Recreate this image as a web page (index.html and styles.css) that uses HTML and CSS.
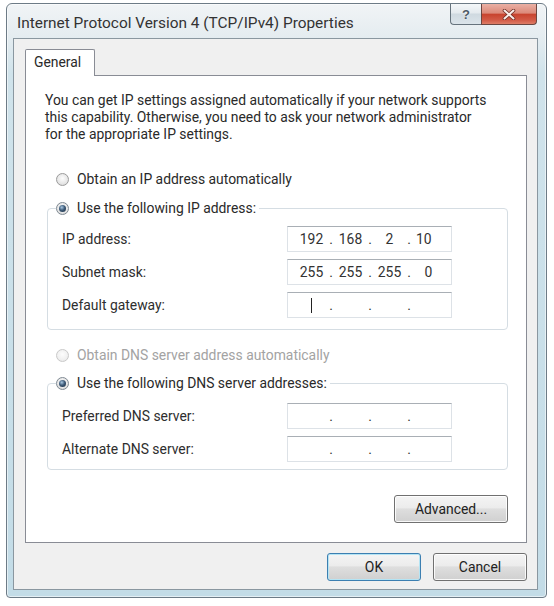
FILE: index.html
```html
<!DOCTYPE html>
<html lang="en">
<head>
<meta charset="utf-8">
<title>Internet Protocol Version 4 (TCP/IPv4) Properties</title>
<link rel="stylesheet" href="styles.css">
</head>
<body>
<div class="window">
  <div class="titlebar">
    <div class="title">Internet Protocol Version 4 (TCP/IPv4) Properties</div>
    <div class="caption-buttons">
      <div class="cbtn help">?</div>
      <div class="cbtn close">
        <svg width="14" height="11" viewBox="0 0 14 11">
          <path d="M2.5 1.5 L11.5 9.5 M11.5 1.5 L2.5 9.5" stroke="#6e2c24" stroke-width="3.6" stroke-linecap="round" fill="none"/>
          <path d="M2.5 1.5 L11.5 9.5 M11.5 1.5 L2.5 9.5" stroke="#fbeeea" stroke-width="2" stroke-linecap="round" fill="none"/>
        </svg>
      </div>
    </div>
  </div>
  <div class="client">
    <div class="tabs"><div class="tab">General</div></div>
    <div class="panel">
      <p class="intro">You can get IP settings assigned automatically if your network supports<br>this capability. Otherwise, you need to ask your network administrator<br>for the appropriate IP settings.</p>

      <div class="option first"><span class="radio"></span><span>Obtain an IP address automatically</span></div>

      <fieldset class="group">
        <legend class="legend"><span class="radio on"></span><span>Use the following IP address:</span></legend>
        <div class="rows ip-rows">
          <div class="label">IP address:</div>
          <div class="ipbox"><span class="seg">192</span><span class="dot">.</span><span class="seg">168</span><span class="dot">.</span><span class="seg">2</span><span class="dot">.</span><span class="seg seg-left">10</span></div>
          <div class="label">Subnet mask:</div>
          <div class="ipbox"><span class="seg">255</span><span class="dot">.</span><span class="seg">255</span><span class="dot">.</span><span class="seg">255</span><span class="dot">.</span><span class="seg">0</span></div>
          <div class="label">Default gateway:</div>
          <div class="ipbox"><span class="seg"><span class="caret"></span></span><span class="dot">.</span><span class="seg"></span><span class="dot">.</span><span class="seg"></span><span class="dot">.</span><span class="seg"></span></div>
        </div>
      </fieldset>

      <div class="option disabled dns-auto"><span class="radio"></span><span>Obtain DNS server address automatically</span></div>

      <fieldset class="group dns-group">
        <legend class="legend"><span class="radio on"></span><span>Use the following DNS server addresses:</span></legend>
        <div class="rows dns-rows">
          <div class="label">Preferred DNS server:</div>
          <div class="ipbox"><span class="seg"></span><span class="dot">.</span><span class="seg"></span><span class="dot">.</span><span class="seg"></span><span class="dot">.</span><span class="seg"></span></div>
          <div class="label">Alternate DNS server:</div>
          <div class="ipbox"><span class="seg"></span><span class="dot">.</span><span class="seg"></span><span class="dot">.</span><span class="seg"></span><span class="dot">.</span><span class="seg"></span></div>
        </div>
      </fieldset>

      <button class="btn adv">Advanced...</button>
    </div>
    <div class="dlg-buttons">
      <button class="btn ok">OK</button>
      <button class="btn">Cancel</button>
    </div>
  </div>
</div>
</body>
</html>
```

FILE: styles.css
```css
html, body {
  margin: 0;
  background: #ffffff;
}

body {
  font-family: Roboto, "Liberation Sans", sans-serif;
  font-size: 13.9px;
  color: #2a2a2a;
}

.window {
  margin: 3px 0 0 6px;
  width: 541px;
  box-sizing: border-box;
  border: 1px solid #6d7b86;
  border-radius: 6px 6px 4px 4px;
  background: linear-gradient(to bottom, #f1f4f6 0px, #e4ecf0 34px, #d0e3eb 70px, #c3dce7 100%);
  box-shadow: inset 0 0 0 1px rgba(255, 255, 255, 0.55);
  display: flex;
  flex-direction: column;
}

.titlebar {
  display: flex;
  height: 34px;
  padding-left: 10px;
}

.title {
  padding-top: 10px;
  font-size: 15.4px;
  line-height: 18px;
  color: #333333;
}

.caption-buttons {
  margin-left: auto;
  margin-right: 9px;
  display: flex;
  height: 21px;
}

.cbtn {
  box-sizing: border-box;
  height: 21px;
  display: flex;
  align-items: center;
  justify-content: center;
  border: 1px solid #66737d;
  border-top: none;
}

.help {
  width: 31px;
  border-right: none;
  border-radius: 0 0 0 4px;
  background: linear-gradient(to bottom, #f4f7f9 0%, #e4eaee 45%, #cfd9e0 50%, #dbe4ea 100%);
  font-family: "Liberation Sans", sans-serif;
  font-weight: bold;
  font-size: 13px;
  color: #4d5a64;
  text-shadow: 0 0 2px #ffffff;
}

.close {
  width: 56px;
  border-color: #6b4640;
  border-radius: 0 0 4px 0;
  background: linear-gradient(to bottom, #eab0a4 0%, #dc8a7a 45%, #c8442f 52%, #d25a46 80%, #de7d66 100%);
}

.close svg {
  display: block;
}

.client {
  margin: 0 8px 7px 6px;
  border: 1px solid #8a97a0;
  background: #f0f0f0;
  padding: 10px 10px 8px 11px;
  display: flex;
  flex-direction: column;
}

.tabs {
  display: flex;
}

.tab {
  position: relative;
  z-index: 1;
  box-sizing: border-box;
  height: 27px;
  margin-bottom: -1px;
  padding: 4px 13px 0 8px;
  line-height: 17px;
  border: 1px solid #898c95;
  border-bottom: none;
  border-radius: 2px 2px 0 0;
  background: #ffffff;
  color: #2a2a2a;
}

.panel {
  border: 1px solid #898c95;
  background: #ffffff;
  padding: 16px 18px 19px 19px;
  display: flex;
  flex-direction: column;
}

.intro {
  margin: 0;
  line-height: 17px;
}

.option,
.legend {
  display: flex;
  align-items: center;
  gap: 8px;
  height: 18px;
  line-height: 18px;
  color: #2a2a2a;
}

.option {
  margin-left: 11px;
}

.option.first {
  margin-top: 27px;
}

.option.dns-auto {
  margin-top: 16px;
}

.option.disabled {
  color: #a3a3a3;
}

.radio {
  flex: none;
  box-sizing: border-box;
  width: 13px;
  height: 13px;
  border-radius: 50%;
  border: 1px solid #9b9b9b;
  background: radial-gradient(circle at 50% 40%, #fdfdfd 0%, #e6e6e6 60%, #cfcfcf 100%);
}

.disabled .radio {
  border-color: #c9c9c9;
  background: radial-gradient(circle at 50% 40%, #fdfdfd 0%, #f0f0f0 60%, #e2e2e2 100%);
}

.radio.on {
  border-color: #7f8a93;
}

.radio.on::after {
  content: "";
  display: block;
  width: 7px;
  height: 7px;
  margin: 2px;
  border-radius: 50%;
  background: radial-gradient(circle at 40% 35%, #a9c8e2 0%, #3f5c7a 45%, #15283b 100%);
}

.group {
  margin: 11px 0 0 2px;
  padding: 0;
  min-width: 0;
  border: 1px solid #d5dde3;
  border-radius: 4px;
}

.group.dns-group {
  margin-top: 10px;
}

.legend {
  margin-left: 8px;
  padding: 0 3px 0 0;
}

.rows {
  display: grid;
  grid-template-columns: 225px 165px;
  align-items: center;
  row-gap: 7px;
  padding: 9px 0 11px 14px;
}

.rows.dns-rows {
  padding: 11px 0 7px 14px;
}

.label {
  line-height: 18px;
  color: #2e2e2e;
}

.ipbox {
  box-sizing: border-box;
  height: 26px;
  display: flex;
  align-items: center;
  padding-left: 7px;
  border: 1px solid #dde2e7;
  border-top-color: #a9afb5;
  background: #ffffff;
  color: #333333;
}

.seg {
  width: 33px;
  display: flex;
  justify-content: center;
  align-items: center;
  height: 18px;
  line-height: 18px;
}

.seg.seg-left {
  justify-content: flex-start;
  padding-left: 4px;
  box-sizing: border-box;
}

.dot {
  width: 6px;
  text-align: center;
  line-height: 18px;
}

.caret {
  display: block;
  width: 1px;
  height: 15px;
  background: #222222;
}

.btn {
  font: inherit;
  color: #222222;
  height: 28px;
  padding: 0;
  border: 1px solid #707070;
  border-radius: 3px;
  background: linear-gradient(to bottom, #f4f4f4 0%, #ececec 45%, #dedede 50%, #d0d0d0 100%);
  box-shadow: inset 0 0 0 1px rgba(255, 255, 255, 0.85);
}

.btn.adv {
  align-self: flex-end;
  width: 114px;
  margin-top: 25px;
}

.dlg-buttons {
  display: flex;
  justify-content: flex-end;
  gap: 12px;
  margin-top: 10px;
}

.dlg-buttons .btn {
  width: 94px;
}

.btn.ok {
  border-color: #3c7fb1;
  box-shadow: inset 0 0 0 1px #b4e4f4;
}
```
